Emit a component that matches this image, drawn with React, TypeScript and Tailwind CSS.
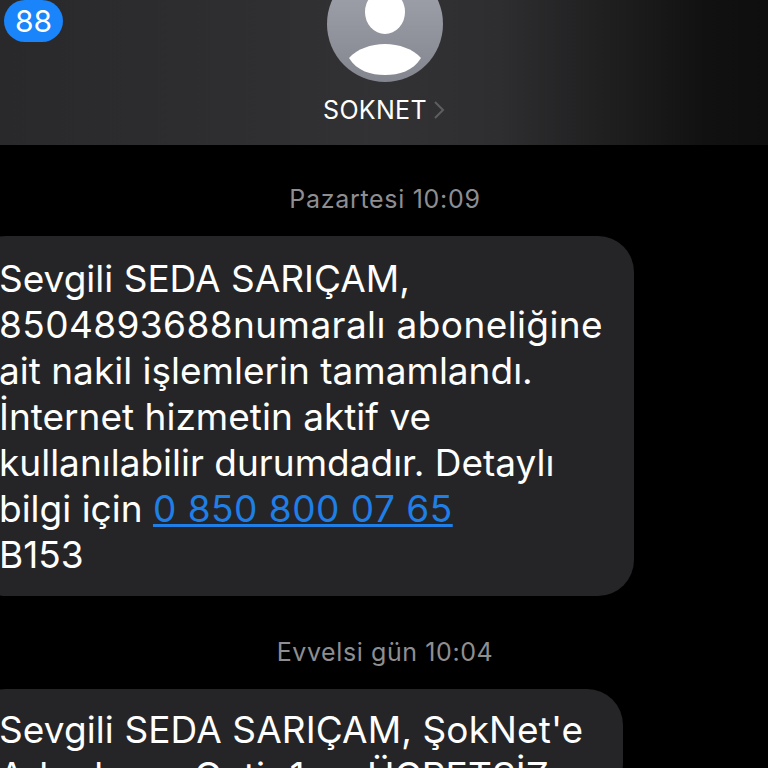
function Badge() {
  return (
    <div className="flex h-[42px] w-[59px] items-center justify-center rounded-[21px] bg-[#1a84fb] text-[30px] leading-none text-white">
      88
    </div>
  );
}

function Avatar() {
  return (
    <svg width="116" height="116" viewBox="0 0 116 116" className="block">
      <defs>
        <linearGradient id="avatarFill" x1="0" y1="0" x2="0" y2="1">
          <stop offset="0" stopColor="#a5a7b0" />
          <stop offset="1" stopColor="#83858f" />
        </linearGradient>
      </defs>
      <circle cx="58" cy="58" r="58" fill="url(#avatarFill)" />
      <ellipse cx="58" cy="46" rx="20" ry="22" fill="#ffffff" />
      <path d="M22 92C30 83 44 78 58 78C72 78 86 83 94 92C86 105 72 109 58 109C44 109 30 105 22 92Z" fill="#ffffff" />
    </svg>
  );
}

function Bubble({ children, width }: { children: React.ReactNode; width: string }) {
  return (
    <div className={`ml-[-30px] overflow-hidden rounded-[36px] bg-[#252527] pl-[29px] text-[37px] leading-[46px] text-white ${width}`}>
      {children}
    </div>
  );
}

export default function App() {
  return (
    <div className="h-[768px] w-[768px] overflow-hidden bg-black font-['Inter','Liberation_Sans',sans-serif]">
      <div className="relative flex h-[145px] flex-col items-center bg-[linear-gradient(90deg,#29292b_0%,#2e2e30_30%,#323234_50%,#2e2e30_65%,#1e1e1f_80%,#111111_92%,#0e0e0e_100%)]">
        <div className="absolute left-[4px] top-0">
          <Badge />
        </div>
        <div className="ml-[2px] mt-[-34px]">
          <Avatar />
        </div>
        <div className="mt-[13px] flex items-center gap-[6px] text-[25px] leading-[30px] tracking-[0.3px] text-white">
          <span>SOKNET</span>
          <svg width="12" height="20" viewBox="0 0 12 20" fill="none" stroke="#5e5e62" strokeWidth="2">
            <path d="M2 2L10 10L2 18" />
          </svg>
        </div>
      </div>

      <div className="mt-[39px] pl-[2px] text-center text-[25px] leading-[30px] tracking-[0.7px] text-[#8e8e92]">
        Pazartesi 10:09
      </div>

      <div className="mt-[22px]">
        <Bubble width="w-[664px] h-[360px]">
          <div className="pt-[20px]">
            Sevgili SEDA SARIÇAM,
            <br />
            <span className="tracking-[0.4px]">8504893688numaralı aboneliğine</span>
            <br />
            ait nakil işlemlerin tamamlandı.
            <br />
            İnternet hizmetin aktif ve
            <br />
            kullanılabilir durumdadır. Detaylı
            <br />
            bilgi için <span className="text-[#1f7fe6] underline tracking-[0.5px]">0 850 800 07 65</span>
            <br />
            B153
          </div>
        </Bubble>
      </div>

      <div className="mt-[41px] pl-[2px] text-center text-[25px] leading-[30px] tracking-[0.6px] text-[#8e8e92]">
        Evvelsi gün 10:04
      </div>

      <div className="mt-[22px]">
        <Bubble width="w-[653px]">
          <div className="pt-[18px] tracking-[0.1px]">
            Sevgili SEDA SARIÇAM, ŞokNet'e
            <br />
            Arkadaşını Getir 1 ay ÜCRETSİZ
          </div>
        </Bubble>
      </div>
    </div>
  );
}
